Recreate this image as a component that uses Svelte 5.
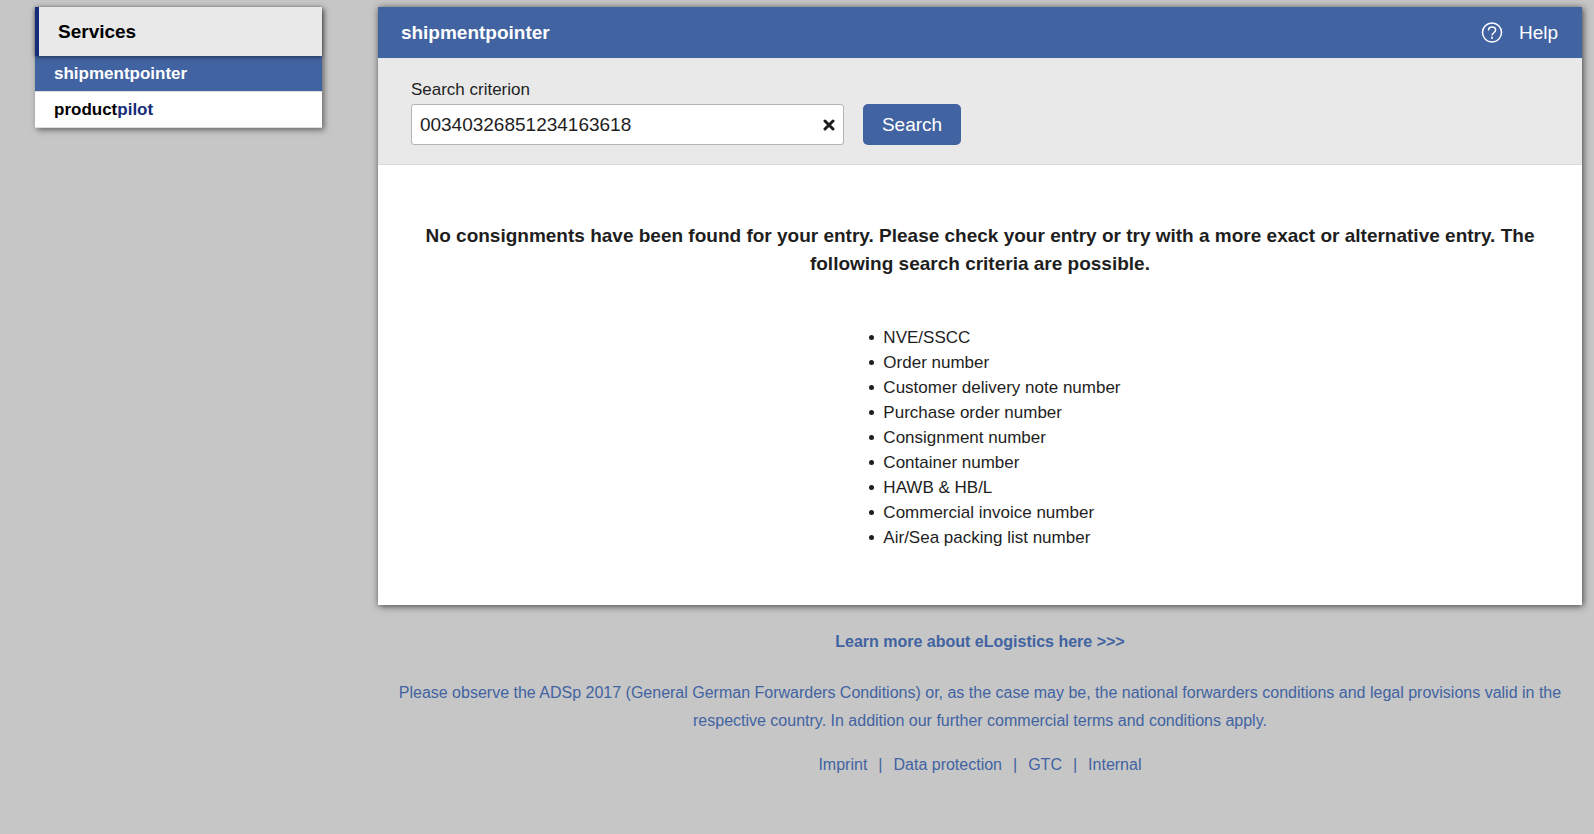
<script lang="ts">
  let criterion = $state('00340326851234163618');

  const criteria = [
    'NVE/SSCC',
    'Order number',
    'Customer delivery note number',
    'Purchase order number',
    'Consignment number',
    'Container number',
    'HAWB & HB/L',
    'Commercial invoice number',
    'Air/Sea packing list number',
  ];

  const footerLinks = ['Imprint', 'Data protection', 'GTC', 'Internal'];
</script>

<div class="page">
  <nav class="services" aria-labelledby="services-title">
    <h2 class="services-title" id="services-title">Services</h2>
    <a class="service active" href="#shipmentpointer" aria-current="page">shipmentpointer</a>
    <a class="service" href="#productpilot">product<span class="accent">pilot</span></a>
  </nav>

  <div class="content">
    <main class="panel">
      <header class="panel-header">
        <h1 class="panel-title">shipmentpointer</h1>
        <a class="help" href="#help">
          <svg width="22" height="22" viewBox="0 0 22 22" fill="none" stroke="currentColor" stroke-width="1.5" aria-hidden="true">
            <circle cx="11" cy="10.5" r="9.5" />
            <path d="M7.5 8.4C7.5 6.3 8.9 5 11 5s3.6 1.2 3.6 3c0 2.6-3.6 2.9-3.6 5.5" />
            <path d="M10.1 15.8h1.8" stroke-width="1.9" />
          </svg>
          <span>Help</span>
        </a>
      </header>

      <form class="search" onsubmit={(e) => e.preventDefault()}>
        <div class="field">
          <label for="criterion">Search criterion</label>
          <div class="input-wrap">
            <input id="criterion" type="text" bind:value={criterion} />
            <button class="clear" type="button" aria-label="Clear" onclick={() => (criterion = '')}>
              <svg width="12" height="12" viewBox="0 0 12 12" fill="none" stroke="currentColor" stroke-width="3" stroke-linecap="round" aria-hidden="true">
                <path d="M2 2l8 8M10 2l-8 8" />
              </svg>
            </button>
          </div>
        </div>
        <button class="submit" type="submit">Search</button>
      </form>

      <section class="result">
        <p class="message">
          No consignments have been found for your entry. Please check your entry or try with a more exact or alternative entry. The following search criteria are possible.
        </p>
        <ul class="criteria">
          {#each criteria as item (item)}
            <li>{item}</li>
          {/each}
        </ul>
      </section>
    </main>

    <footer class="footer">
      <a class="learn-more" href="#elogistics">Learn more about eLogistics here &gt;&gt;&gt;</a>
      <p class="terms">
        Please observe the ADSp 2017 (General German Forwarders Conditions) or, as the case may be, the national forwarders conditions and legal provisions valid in the respective country. In addition our further commercial terms and conditions apply.
      </p>
      <div class="links">
        {#each footerLinks as link, i (link)}
          {#if i > 0}<span>|</span>{/if}
          <a href="#{link}">{link}</a>
        {/each}
      </div>
    </footer>
  </div>
</div>

<style>
  :global(body) {
    margin: 0;
    background: #c6c6c6;
    color: #1e1e1e;
    font-family: "Liberation Sans", Arial, sans-serif;
    font-size: 17px;
  }

  a {
    color: inherit;
    text-decoration: none;
  }

  .page {
    display: flex;
    align-items: flex-start;
    gap: 56px;
    padding: 7px 12px 48px 35px;
  }

  .services {
    flex: 0 0 18vw;
    background: #fff;
    color: #000;
    box-shadow: 2px 2px 6px rgba(0, 0, 0, 0.5);
  }

  .services-title {
    position: relative;
    margin: 0;
    padding: 13px 19px 12px;
    border-left: 4px solid #162c78;
    background: #e9e9e9;
    box-shadow: 0 1px 4px rgba(0, 0, 0, 0.5);
    font-size: 19px;
    line-height: 24px;
  }

  .service {
    display: block;
    padding: 4px 19px 3px;
    border-bottom: 1px solid #ddd;
    font-weight: 700;
    line-height: 28px;
  }

  .service.active {
    background: #4163a1;
    color: #fff;
  }

  .accent {
    color: #162c78;
  }

  .content {
    flex: 1;
    min-width: 0;
  }

  .panel {
    background: #fff;
    box-shadow: 1px 1px 7px rgba(0, 0, 0, 0.7);
  }

  .panel-header {
    display: flex;
    align-items: center;
    justify-content: space-between;
    padding: 13px 24px 13px 23px;
    background: #4163a1;
    color: #fff;
    font-size: 19px;
    line-height: 25px;
  }

  .panel-title {
    margin: 0;
    font-size: 19px;
  }

  .help {
    display: flex;
    align-items: center;
    gap: 16px;
  }

  .search {
    display: flex;
    align-items: flex-end;
    gap: 19px;
    padding: 20px 33px 19px;
    border-bottom: 1px solid #d6dadd;
    background: #e9e9e9;
  }

  .field {
    flex: 0 1 433px;
  }

  .field label {
    display: block;
    margin-bottom: 2px;
    line-height: 24px;
  }

  .input-wrap {
    display: flex;
    border: 1px solid #b4b4b4;
    border-radius: 3px;
    background: #fff;
  }

  .input-wrap input {
    flex: 1;
    min-width: 0;
    height: 39px;
    padding: 0 8px;
    border: 0;
    background: transparent;
    color: inherit;
    font-family: inherit;
    font-size: 19px;
  }

  .clear {
    display: flex;
    align-items: center;
    padding: 0 8px;
    border: 0;
    background: transparent;
    color: inherit;
    cursor: pointer;
  }

  .submit {
    height: 41px;
    padding: 0 19px;
    border: 0;
    border-radius: 5px;
    background: #4163a1;
    color: #fff;
    font-family: inherit;
    font-size: 19px;
    cursor: pointer;
  }

  .result {
    padding: 57px 40px 55px;
  }

  .message {
    margin: 0 0 47px;
    font-size: 19px;
    font-weight: 700;
    line-height: 28px;
    text-align: center;
  }

  .criteria {
    width: fit-content;
    margin: 0 auto;
    padding-left: 30px;
    line-height: 25px;
    list-style: none;
  }

  .criteria li {
    display: flex;
    align-items: center;
    gap: 9px;
  }

  .criteria li::before {
    content: "";
    width: 5px;
    height: 5px;
    border-radius: 50%;
    background: currentColor;
  }

  .footer {
    display: flex;
    flex-direction: column;
    align-items: center;
    padding-top: 23px;
    color: #4163a1;
    font-size: 16px;
    line-height: 28px;
    text-align: center;
  }

  .learn-more {
    font-weight: 700;
  }

  .terms {
    margin: 23px 0 16px;
  }

  .links {
    display: flex;
    gap: 11px;
  }
</style>
